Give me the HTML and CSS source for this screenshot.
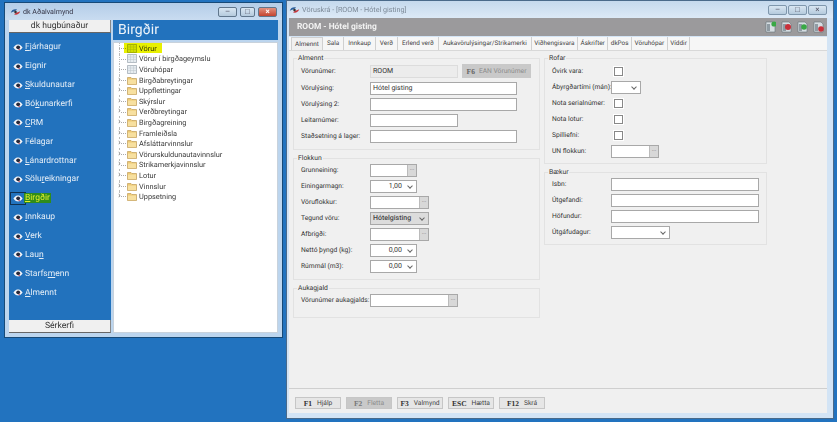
FILE: index.html
```html
<!DOCTYPE html>
<html lang="is">
<head>
<meta charset="utf-8">
<title>dk Aðalvalmynd</title>
<link rel="stylesheet" href="styles.css">
</head>
<body>
<svg class="defs" width="0" height="0">
  <defs>
    <symbol id="eye" viewBox="0 0 12 8">
      <path d="M0.5 4C2.5 1 4.5 .5 6 .5S9.5 1 11.5 4C9.5 7 7.5 7.5 6 7.5S2.5 7 .5 4Z" fill="#f4f6fa"/>
      <circle cx="6.2" cy="3.8" r="2.3" fill="#2a2a3a"/>
      <path d="M6 6.2h3l-1.5 1z" fill="#c8283a"/>
    </symbol>
    <symbol id="logo" viewBox="0 0 14 10">
      <path d="M1 6C2 2 6 1 9 2L6 4 3 5z" fill="#2b5f9c"/>
      <path d="M13 4c-1 4-5 5-8 4l3-2 3-1z" fill="#c8343a"/>
      <circle cx="7" cy="5" r="1.6" fill="#333"/>
    </symbol>
    <symbol id="folder" viewBox="0 0 10 9">
      <path d="M.5 1.5h3.5l1 1h4.5v6h-9z" fill="#eec973" stroke="#b9924a" stroke-width=".6"/>
      <path d="M1 3.5h8v4.6h-8z" fill="#f7e0a0"/>
    </symbol>
    <symbol id="table" viewBox="0 0 10 9">
      <path d="M.5.5h9v8h-9z" fill="#e6ecf0" stroke="#9aa5ad" stroke-width=".7"/>
      <path d="M.5 3h9M.5 5.5h9M3.5.5v8M6.5.5v8" stroke="#bcc6cc" stroke-width=".5"/>
    </symbol>
    <symbol id="doc" viewBox="0 0 11 12">
      <path d="M1 1h7l2 2v8H1z" fill="#d6dde2" stroke="#66727a" stroke-width=".6"/>
      <path d="M2 3h3v7H2z" fill="#8f9ba3"/>
    </symbol>
  </defs>
</svg>

<section class="window main-window">
  <header class="titlebar">
    <svg class="logo"><use href="#logo"/></svg>
    <span class="title-text">dk Aðalvalmynd</span>
    <div class="win-buttons">
      <span class="win-btn">&#8211;</span>
      <span class="win-btn small">&#9633;</span>
      <span class="win-btn close">&#215;</span>
    </div>
  </header>
  <div class="main-body">
    <nav class="sidebar">
      <div class="side-head">dk hugbúnaður</div>
      <ul class="side-list">
        <li class="side-item"><svg class="eye"><use href="#eye"/></svg><span><u>F</u>járhagur</span></li>
        <li class="side-item"><svg class="eye"><use href="#eye"/></svg><span>Eignir</span></li>
        <li class="side-item"><svg class="eye"><use href="#eye"/></svg><span><u>S</u>kuldunautar</span></li>
        <li class="side-item"><svg class="eye"><use href="#eye"/></svg><span>Bó<u>k</u>unarkerfi</span></li>
        <li class="side-item"><svg class="eye"><use href="#eye"/></svg><span><u>C</u>RM</span></li>
        <li class="side-item"><svg class="eye"><use href="#eye"/></svg><span>Félagar</span></li>
        <li class="side-item"><svg class="eye"><use href="#eye"/></svg><span><u>L</u>ánardrottnar</span></li>
        <li class="side-item"><svg class="eye"><use href="#eye"/></svg><span>Sölu<u>r</u>eikningar</span></li>
        <li class="side-item selected"><svg class="eye"><use href="#eye"/></svg><span class="mark-green"><u>B</u>irgðir</span></li>
        <li class="side-item"><svg class="eye"><use href="#eye"/></svg><span><u>I</u>nnkaup</span></li>
        <li class="side-item"><svg class="eye"><use href="#eye"/></svg><span><u>V</u>erk</span></li>
        <li class="side-item"><svg class="eye"><use href="#eye"/></svg><span>Lau<u>n</u></span></li>
        <li class="side-item"><svg class="eye"><use href="#eye"/></svg><span>Starfs<u>m</u>enn</span></li>
        <li class="side-item"><svg class="eye"><use href="#eye"/></svg><span><u>A</u>lmennt</span></li>
      </ul>
      <div class="side-foot">Sérkerfi</div>
    </nav>
    <div class="tree-pane">
      <h1 class="tree-title">Birgðir</h1>
      <ul class="tree">
        <li class="tree-row leaf"><svg class="node"><use href="#table"/></svg><span>Vörur</span><i class="mark-yellow"></i></li>
        <li class="tree-row leaf"><svg class="node"><use href="#table"/></svg><span>Vörur í birgðageymslu</span></li>
        <li class="tree-row leaf"><svg class="node"><use href="#table"/></svg><span>Vöruhópar</span></li>
        <li class="tree-row"><b class="exp">&#8250;</b><svg class="node"><use href="#folder"/></svg><span>Birgðabreytingar</span></li>
        <li class="tree-row"><b class="exp">&#8250;</b><svg class="node"><use href="#folder"/></svg><span>Uppflettingar</span></li>
        <li class="tree-row"><b class="exp">&#8250;</b><svg class="node"><use href="#folder"/></svg><span>Skýrslur</span></li>
        <li class="tree-row"><b class="exp">&#8250;</b><svg class="node"><use href="#folder"/></svg><span>Verðbreytingar</span></li>
        <li class="tree-row"><b class="exp">&#8250;</b><svg class="node"><use href="#folder"/></svg><span>Birgðagreining</span></li>
        <li class="tree-row"><b class="exp">&#8250;</b><svg class="node"><use href="#folder"/></svg><span>Framleiðsla</span></li>
        <li class="tree-row"><b class="exp">&#8250;</b><svg class="node"><use href="#folder"/></svg><span>Afsláttarvinnslur</span></li>
        <li class="tree-row"><b class="exp">&#8250;</b><svg class="node"><use href="#folder"/></svg><span>Vörurskuldunautavinnslur</span></li>
        <li class="tree-row"><b class="exp">&#8250;</b><svg class="node"><use href="#folder"/></svg><span>Strikamerkjavinnslur</span></li>
        <li class="tree-row"><b class="exp">&#8250;</b><svg class="node"><use href="#folder"/></svg><span>Lotur</span></li>
        <li class="tree-row"><b class="exp">&#8250;</b><svg class="node"><use href="#folder"/></svg><span>Vinnslur</span></li>
        <li class="tree-row"><b class="exp">&#8250;</b><svg class="node"><use href="#folder"/></svg><span>Uppsetning</span></li>
      </ul>
    </div>
  </div>
</section>

<section class="window item-window">
  <header class="titlebar inactive">
    <svg class="logo"><use href="#logo"/></svg>
    <span class="title-text">Vöruskrá - [ROOM - Hótel gisting]</span>
    <div class="win-buttons">
      <span class="win-btn">&#8211;</span>
      <span class="win-btn">&#9633;</span>
      <span class="win-btn">&#215;</span>
    </div>
  </header>
  <div class="item-head">
    <span class="item-name">ROOM - Hótel gisting</span>
    <div class="tools">
      <svg class="tool"><use href="#doc"/><circle cx="9" cy="3" r="2.6" fill="#39a845"/></svg>
      <svg class="tool"><use href="#doc"/><circle cx="7" cy="6" r="3" fill="#c8303a"/></svg>
      <svg class="tool"><use href="#doc"/><circle cx="7" cy="6" r="2.8" fill="#39a845"/></svg>
      <svg class="tool"><use href="#doc"/><circle cx="8" cy="8" r="2.8" fill="#c8303a"/></svg>
    </div>
  </div>
  <div class="tabs">
    <span class="tab active">Almennt</span>
    <span class="tab">Sala</span>
    <span class="tab">Innkaup</span>
    <span class="tab">Verð</span>
    <span class="tab">Erlend verð</span>
    <span class="tab">Aukavörulýsingar/Strikamerki</span>
    <span class="tab">Viðhengisvara</span>
    <span class="tab">Áskrifter</span>
    <span class="tab">dkPos</span>
    <span class="tab">Vöruhópar</span>
    <span class="tab">Víddir</span>
  </div>
  <div class="panel">
    <div class="form">
      <div class="col col-left">
        <fieldset class="group g-almennt">
          <legend>Almennt</legend>
          <div class="row tall lift"><label>Vörunúmer:</label><span class="field readonly w88">ROOM</span><span class="ean"><b>F6</b>EAN Vörunúmer</span></div>
          <div class="row"><label>Vörulýsing:</label><span class="field w147">Hótel gisting</span></div>
          <div class="row"><label>Vörulýsing 2:</label><span class="field w147"></span></div>
          <div class="row"><label>Leitarnúmer:</label><span class="field w88"></span></div>
          <div class="row"><label>Staðsetning á lager:</label><span class="field w147"></span></div>
        </fieldset>
        <fieldset class="group g-flokkun">
          <legend>Flokkun</legend>
          <div class="row lift"><label>Grunneining:</label><span class="field w47 lookup"><i class="dots">...</i></span></div>
          <div class="row"><label>Einingarmagn:</label><span class="field w47 num">1,00<i class="chev"></i></span></div>
          <div class="row"><label>Vöruflokkur:</label><span class="field w59 lookup"><i class="dots">...</i></span></div>
          <div class="row"><label>Tegund vöru:</label><span class="field w59 select">Hótelgisting<i class="chev"></i></span></div>
          <div class="row"><label>Afbrigði:</label><span class="field w59 lookup"><i class="dots">...</i></span></div>
          <div class="row"><label>Nettó þyngd (kg):</label><span class="field w47 num">0,00<i class="chev"></i></span></div>
          <div class="row"><label>Rúmmál (m3):</label><span class="field w47 num">0,00<i class="chev"></i></span></div>
        </fieldset>
        <fieldset class="group g-auka">
          <legend>Aukagjald</legend>
          <div class="row lift"><label>Vörunúmer aukagjalds:</label><span class="field w88 lookup"><i class="dots">...</i></span></div>
        </fieldset>
      </div>
      <div class="col col-right">
        <fieldset class="group g-rofar">
          <legend>Rofar</legend>
          <div class="row"><label>Óvirk vara:</label><span class="check"></span></div>
          <div class="row"><label>Ábyrgðartími (mán):</label><span class="field w30"><i class="chev"></i></span></div>
          <div class="row"><label>Nota serialnúmer:</label><span class="check"></span></div>
          <div class="row"><label>Nota lotur:</label><span class="check"></span></div>
          <div class="row"><label>Spilliefni:</label><span class="check"></span></div>
          <div class="row"><label>UN flokkun:</label><span class="field w48 lookup"><i class="dots">...</i></span></div>
        </fieldset>
        <fieldset class="group g-baekur">
          <legend>Bækur</legend>
          <div class="row lift"><label>Isbn:</label><span class="field w148"></span></div>
          <div class="row"><label>Útgefandi:</label><span class="field w148"></span></div>
          <div class="row"><label>Höfundur:</label><span class="field w148"></span></div>
          <div class="row"><label>Útgáfudagur:</label><span class="field w59"><i class="chev"></i></span></div>
        </fieldset>
      </div>
    </div>
    <footer class="actions">
      <span class="action"><b>F1</b>Hjálp</span>
      <span class="action off"><b>F2</b>Fletta</span>
      <span class="action"><b>F3</b>Valmynd</span>
      <span class="action"><b>ESC</b>Hætta</span>
      <span class="action"><b>F12</b>Skrá</span>
    </footer>
  </div>
</section>
</body>
</html>
```

FILE: styles.css
```css
* { box-sizing: border-box; }
html, body { height: 100%; }
body {
  margin: 0;
  position: relative;
  overflow: hidden;
  width: 837px;
  height: 422px;
  background: #2273bf;
  font-family: Roboto, "Liberation Sans", Arial, sans-serif;
  font-size: 6.7px;
  color: #333;
  text-rendering: geometricPrecision;
  filter: blur(0.35px);
}
.defs { position: absolute; }
ul { list-style: none; margin: 0; padding: 0; }

.window {
  position: absolute;
  display: flex;
  flex-direction: column;
  border: 1px solid #174a78;
  background: #bcd5ee;
}
.main-window { left: 4px; top: 2px; width: 279px; height: 336px; padding: 0 4px 4px; }
.item-window {
  left: 286px; top: 0; width: 548px; height: 419px;
  padding: 0 6px 5px 2px;
  border-color: #4a6a8a;
  background: #d3e4f5;
}

.titlebar {
  flex: none;
  display: flex;
  align-items: center;
  height: 17px;
  background: linear-gradient(#b4cde8, #c9dcf0);
  margin: 0 -4px;
  padding: 0 5px;
}
.item-window .titlebar {
  margin: 0 -6px 0 -2px;
  padding: 0 6px 0 2px;
  background: linear-gradient(#c5d9ed, #dce9f6);
}
.logo { width: 11px; height: 8px; margin-right: 2px; }
.title-text { font-size: 7.1px; color: #334; }
.inactive .title-text { font-size: 7.2px; color: #7d8a98; }
.win-buttons { margin-left: auto; display: flex; gap: 1px; }
.main-window .win-buttons { gap: 3px; }
.win-btn {
  width: 19px;
  height: 10px;
  display: flex;
  align-items: center;
  justify-content: center;
  border: 1px solid #7f97ad;
  border-radius: 2px;
  background: linear-gradient(#d9e6f2, #b5cadd);
  color: #556;
  font-size: 8px;
  line-height: 1;
}
.main-window .win-btn { border-color: #60768c; }
.win-btn.small { width: 15px; }
.win-btn.close { background: linear-gradient(#e2917f, #c4442f); color: #fff; font-weight: bold; }

.main-body { flex: 1; display: flex; gap: 2px; min-height: 0; }
.sidebar {
  width: 102px;
  display: flex;
  flex-direction: column;
  background: #2272bd;
}
.side-head, .side-foot {
  flex: none;
  height: 13px;
  background: #f0f0f0;
  border-right: 1px solid #888;
  border-bottom: 1px solid #666;
  text-align: center;
  font-size: 8.6px;
  line-height: 12px;
  color: #333;
}
.side-list { flex: 1; padding-top: 5px; }
.side-item {
  display: flex;
  align-items: center;
  gap: 2px;
  height: 18.87px;
  padding-left: 4px;
  color: #e4edf6;
  font-size: 8.5px;
}
.eye { width: 10px; height: 7px; flex: none; }
.selected .eye { outline: 1px solid #10304f; outline-offset: 2px; }
.mark-green { background: #2f8c1c; color: #e2ee2a; padding: 0 1px; margin-left: -1px; }

.tree-pane { flex: 1; display: flex; flex-direction: column; min-width: 0; }
.tree-title {
  flex: none;
  margin: 0 0 2px;
  height: 20px;
  background: #2272bd;
  color: #eef4fa;
  font-weight: normal;
  font-size: 14px;
  line-height: 20px;
  padding-left: 5px;
}
.tree { flex: 1; background: #fff; border: 1px solid #c8d2dc; }
.tree-row {
  position: relative;
  display: flex;
  align-items: center;
  height: 10.6px;
  padding-left: 13px;
  font-size: 7.35px;
  color: #3a3a3a;
}
.tree-row::before {
  content: "";
  position: absolute;
  left: 5px;
  top: 5px;
  width: 7px;
  border-top: 1px dotted #aaa;
}
.tree-row::after {
  content: "";
  position: absolute;
  left: 5px;
  top: 0;
  height: 100%;
  border-left: 1px dotted #bbb;
}
.tree-row:last-child::after { height: 50%; }
.exp {
  position: absolute;
  left: 4px;
  z-index: 1;
  font-weight: normal;
  font-size: 9px;
  color: #777;
  background: #fff;
  line-height: 7px;
}
.node { width: 10px; height: 9px; flex: none; margin-right: 2px; }
.mark-yellow {
  position: absolute;
  left: 10px;
  top: 0;
  width: 38px;
  height: 10px;
  background: #e8f000;
  mix-blend-mode: multiply;
}

.item-head {
  flex: none;
  display: flex;
  align-items: center;
  height: 18px;
  background: #9b9a9c;
  margin: 0 0 1px;
  padding: 0 3px 0 8px;
}
.item-name { font-weight: bold; font-size: 8.4px; color: #f2f2f2; }
.tools { margin-left: auto; display: flex; gap: 5px; }
.tool { width: 11px; height: 12px; }

.tabs {
  flex: none;
  display: flex;
  height: 14px;
  background: #f6f6f6;
  padding-left: 2px;
  border-bottom: 1px solid #d8d8d8;
}
.tab {
  padding: 0 4px;
  font-size: 6.4px;
  line-height: 13px;
  color: #444;
  border-right: 1px solid #d0d0d0;
  white-space: nowrap;
}
.tab:nth-child(n+7) { padding: 0 2.5px; }
.tab.active { padding: 0 3px; background: #f0f0f0; border: 1px solid #d0d0d0; border-bottom: 0; }

.panel { flex: 1; display: flex; flex-direction: column; background: #f0f0f0; min-height: 0; }
.form { flex: 1; display: flex; gap: 4px; padding: 3px 0 0 4px; min-height: 0; }
.col { display: flex; flex-direction: column; }
.col-left { width: 247px; gap: 4px; }
.col-right { width: 223px; gap: 4px; }

.group {
  margin: 0;
  border: 1px solid #e2e2e2;
  padding: 0 0 0 7px;
  min-width: 0;
}
.group legend {
  padding: 0 1px;
  margin-left: -4px;
  font-size: 6.8px;
  line-height: 9px;
  color: #333;
}
.g-almennt { height: 96px; }
.g-flokkun { height: 126px; }
.g-auka { height: 34px; }
.g-rofar { height: 110px; }
.g-baekur { height: 77px; }

.row { display: flex; align-items: center; height: 16px; }
.row.tall { height: 18px; }
.row.lift { margin-top: -1px; }
.row label { flex: none; width: 69px; font-size: 6.7px; color: #333; white-space: nowrap; }
.col-right .row label { width: 59px; }

.field {
  position: relative;
  display: flex;
  align-items: center;
  height: 13px;
  padding-left: 2px;
  background: #fff;
  border: 1px solid #a8a8a8;
  font-size: 7px;
  color: #333;
}
.w30 { width: 30px; }
.w47 { width: 47px; }
.w48 { width: 48px; }
.w59 { width: 59px; }
.w88 { width: 88px; }
.w147 { width: 147px; }
.w148 { width: 148px; }
.readonly { background: #ececec; border-color: #dcdcdc; }
.select { background: #dcdcdc; font-weight: 500; color: #444; font-size: 7px; }
.num { justify-content: flex-end; padding-right: 14px; }
.lookup { padding: 0; }
.dots {
  position: absolute;
  right: 0;
  top: 0;
  bottom: 0;
  width: 9px;
  background: #d8d8d8;
  border-left: 1px solid #bbb;
  text-align: center;
  font-style: normal;
  font-size: 6px;
  line-height: 8px;
  color: #666;
}
.chev {
  position: absolute;
  right: 4px;
  top: 3px;
  width: 4px;
  height: 4px;
  border-right: 1px solid #666;
  border-bottom: 1px solid #666;
  transform: rotate(45deg);
}
.check {
  width: 9px;
  height: 9px;
  margin-left: 3px;
  background: #fff;
  border: 1px solid #888;
  box-shadow: 0 0 0 1px #fff;
}
.ean {
  display: flex;
  align-items: center;
  justify-content: center;
  gap: 4px;
  width: 69px;
  height: 14px;
  margin-left: 4px;
  background: #c9c9c9;
  color: #8c8c8c;
  font-size: 6.7px;
}
.ean b, .action b { font-family: "Liberation Serif", serif; font-size: 7.5px; color: #333; }
.ean b { color: #666; }

.actions {
  flex: none;
  display: flex;
  gap: 5px;
  height: 25px;
  padding: 8px 0 0 6px;
  border-top: 1px solid #cfcfcf;
}
.action {
  display: flex;
  align-items: center;
  justify-content: center;
  gap: 5px;
  width: 46px;
  height: 12px;
  background: #e6e6e6;
  border: 1px solid #c6c6c6;
  font-size: 6.7px;
  color: #444;
}
.action.off { background: #c9c9c9; color: #8c8c8c; }
.action.off b { color: #777; }
```
